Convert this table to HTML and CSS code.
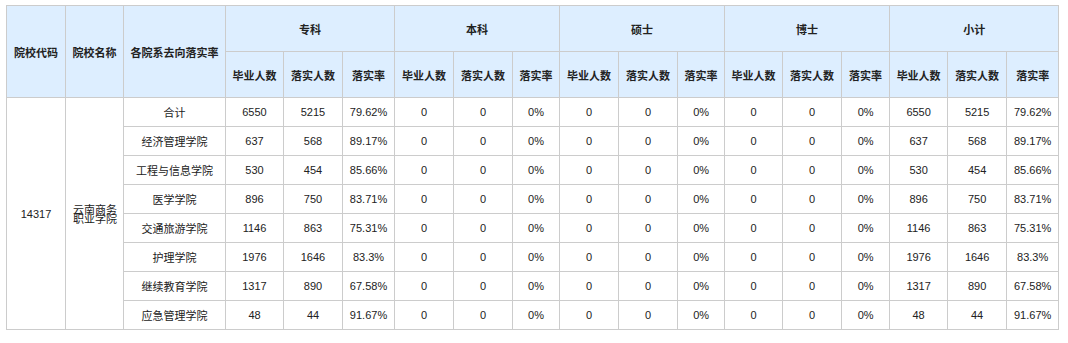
FILE: index.html
```html
<!DOCTYPE html>
<html lang="zh">
<head>
<meta charset="utf-8">
<title>落实率</title>
<link rel="stylesheet" href="styles.css">
</head>
<body>
<table class="grid">
  <colgroup>
    <col class="w59"><col class="w58"><col class="w102">
    <col class="w58"><col class="w59"><col class="w52">
    <col class="w59"><col class="w59"><col class="w47">
    <col class="w59"><col class="w59"><col class="w47">
    <col class="w58"><col class="w59"><col class="w48">
    <col class="w58"><col class="w59"><col class="w52">
  </colgroup>
  <thead>
    <tr class="h1">
      <th rowspan="2">院校代码</th>
      <th rowspan="2">院校名称</th>
      <th rowspan="2">各院系去向落实率</th>
      <th colspan="3">专科</th>
      <th colspan="3">本科</th>
      <th colspan="3">硕士</th>
      <th colspan="3">博士</th>
      <th colspan="3">小计</th>
    </tr>
    <tr class="h2">
      <th>毕业人数</th><th>落实人数</th><th>落实率</th>
      <th>毕业人数</th><th>落实人数</th><th>落实率</th>
      <th>毕业人数</th><th>落实人数</th><th>落实率</th>
      <th>毕业人数</th><th>落实人数</th><th>落实率</th>
      <th>毕业人数</th><th>落实人数</th><th>落实率</th>
    </tr>
  </thead>
  <tbody>
    <tr>
      <td rowspan="8">14317</td>
      <td rowspan="8" class="name">云南商务职业学院</td>
      <td>合计</td><td>6550</td><td>5215</td><td>79.62%</td>
      <td>0</td><td>0</td><td>0%</td><td>0</td><td>0</td><td>0%</td><td>0</td><td>0</td><td>0%</td>
      <td>6550</td><td>5215</td><td>79.62%</td>
    </tr>
    <tr>
      <td>经济管理学院</td><td>637</td><td>568</td><td>89.17%</td>
      <td>0</td><td>0</td><td>0%</td><td>0</td><td>0</td><td>0%</td><td>0</td><td>0</td><td>0%</td>
      <td>637</td><td>568</td><td>89.17%</td>
    </tr>
    <tr>
      <td>工程与信息学院</td><td>530</td><td>454</td><td>85.66%</td>
      <td>0</td><td>0</td><td>0%</td><td>0</td><td>0</td><td>0%</td><td>0</td><td>0</td><td>0%</td>
      <td>530</td><td>454</td><td>85.66%</td>
    </tr>
    <tr>
      <td>医学学院</td><td>896</td><td>750</td><td>83.71%</td>
      <td>0</td><td>0</td><td>0%</td><td>0</td><td>0</td><td>0%</td><td>0</td><td>0</td><td>0%</td>
      <td>896</td><td>750</td><td>83.71%</td>
    </tr>
    <tr>
      <td>交通旅游学院</td><td>1146</td><td>863</td><td>75.31%</td>
      <td>0</td><td>0</td><td>0%</td><td>0</td><td>0</td><td>0%</td><td>0</td><td>0</td><td>0%</td>
      <td>1146</td><td>863</td><td>75.31%</td>
    </tr>
    <tr>
      <td>护理学院</td><td>1976</td><td>1646</td><td>83.3%</td>
      <td>0</td><td>0</td><td>0%</td><td>0</td><td>0</td><td>0%</td><td>0</td><td>0</td><td>0%</td>
      <td>1976</td><td>1646</td><td>83.3%</td>
    </tr>
    <tr>
      <td>继续教育学院</td><td>1317</td><td>890</td><td>67.58%</td>
      <td>0</td><td>0</td><td>0%</td><td>0</td><td>0</td><td>0%</td><td>0</td><td>0</td><td>0%</td>
      <td>1317</td><td>890</td><td>67.58%</td>
    </tr>
    <tr>
      <td>应急管理学院</td><td>48</td><td>44</td><td>91.67%</td>
      <td>0</td><td>0</td><td>0%</td><td>0</td><td>0</td><td>0%</td><td>0</td><td>0</td><td>0%</td>
      <td>48</td><td>44</td><td>91.67%</td>
    </tr>
  </tbody>
</table>
</body>
</html>
```

FILE: styles.css
```css
html, body {
  margin: 0;
  padding: 0;
  background: #ffffff;
}
body {
  padding: 5px 0 0 6px;
  font-family: "Liberation Sans", Arial, "Noto Sans CJK SC", sans-serif;
  font-size: 11px;
  color: #222;
}
.grid {
  border-collapse: collapse;
  table-layout: fixed;
  width: 1053px;
}
.grid th, .grid td {
  border: 1px solid #cccccc;
  padding: 0;
  text-align: center;
  vertical-align: middle;
  white-space: nowrap;
  overflow: hidden;
}
.grid th {
  background: #ddeeff;
  font-weight: bold;
  color: #222;
}
.grid tr.h1 th, .grid tr.h2 th {
  height: 45px;
}
.grid tbody td {
  height: 28px;
}
.grid td.name {
  white-space: normal;
  line-height: 9px;
  padding: 0 6px 0 7px;
  font-family: "Noto Sans CJK SC", sans-serif;
}
.w59 { width: 59px; }
.w58 { width: 58px; }
.w102 { width: 102px; }
.w52 { width: 52px; }
.w47 { width: 47px; }
.w48 { width: 48px; }
```
